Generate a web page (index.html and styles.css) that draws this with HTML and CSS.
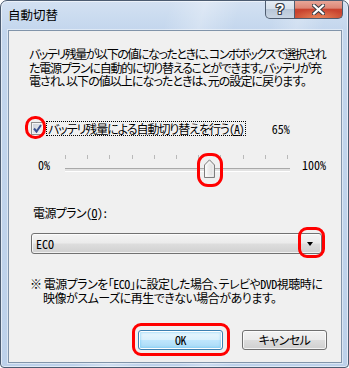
FILE: index.html
```html
<!DOCTYPE html>
<html lang="ja">
<head>
<meta charset="utf-8">
<link rel="stylesheet" href="styles.css">
</head>
<body>
<div class="window">
  <div class="titlebar">
    <div class="title">自動切替</div>
    <div class="caption-buttons">
      <div class="cap help"><span class="help-glyph">?</span></div>
      <div class="cap close">
        <svg width="13" height="11" viewBox="0 0 13 11">
          <path d="M2 1.5 L11 9.5 M11 1.5 L2 9.5" stroke="#3b3f46" stroke-width="4.2" stroke-linecap="square" fill="none"/>
          <path d="M2 1.5 L11 9.5 M11 1.5 L2 9.5" stroke="#ffffff" stroke-width="2.2" stroke-linecap="square" fill="none"/>
        </svg>
      </div>
    </div>
  </div>
  <div class="client">
    <p class="desc"><span class="line tight">バッテリ残量が以下の値になったときに、コンボボックスで選択され</span><span class="line">た電源プランに自動的に切り替えることができます。バッテリが充</span><span class="line loose">電され、以下の値以上になったときは、元の設定に戻ります。</span></p>

    <div class="check-row">
      <span class="checkbox">
        <svg width="11" height="11" viewBox="0 0 11 11"><path d="M2 5.5 L4.5 8.5 L9 2" stroke="#3c5290" stroke-width="2" fill="none"/></svg>
      </span>
      <span class="check-label">バッテリ残量による自動切り替えを行う<span class="lat">(<u>A</u>)</span></span>
      <span class="pct lat">65%</span>
      <span class="mark mark-check"></span>
    </div>

    <div class="slider-row">
      <span class="s-min lat">0%</span>
      <div class="slider">
        <div class="ticks">
          <i></i><i></i><i></i><i></i><i></i><i></i><i></i><i></i><i></i><i></i><i></i>
        </div>
        <div class="track"></div>
        <svg class="thumb" width="11" height="19" viewBox="0 0 11 19">
          <defs>
            <linearGradient id="tg" x1="0" y1="0" x2="1" y2="0">
              <stop offset="0" stop-color="#fbfbfb"/>
              <stop offset="1" stop-color="#d9d9d9"/>
            </linearGradient>
          </defs>
          <path d="M0.5 6 L5.5 0.8 L10.5 6 L10.5 18.5 L0.5 18.5 Z" fill="url(#tg)" stroke="#7d7d7d" stroke-width="1"/>
          <path d="M2 6.5 L5.5 3 L9 6.5 L9 17 L2 17 Z" fill="none" stroke="#ffffff" stroke-width="0.8" opacity="0.8"/>
        </svg>
        <span class="mark mark-thumb"></span>
      </div>
      <span class="s-max lat">100%</span>
    </div>

    <div class="plan-label">電源プラン<span class="lat">(<u>O</u>):</span></div>

    <div class="combo">
      <span class="combo-text lat">ECO</span>
      <span class="arrow"></span>
      <span class="mark mark-arrow"></span>
    </div>

    <div class="note">
      <span class="line">※ 電源プランを「<span class="lat">ECO</span>」に設定した場合、テレビや<span class="lat">DVD</span>視聴時に</span>
      <span class="line indent">映像がスムーズに再生できない場合があります。</span>
    </div>

    <div class="buttons">
      <span class="btn btn-ok"><span class="lat">OK</span><span class="mark mark-ok"></span></span>
      <span class="btn">キャンセル</span>
    </div>
  </div>
</div>
</body>
</html>
```
FILE: styles.css
```css
html, body {
  margin: 0;
  padding: 0;
}
body {
  width: 349px;
  height: 368px;
  overflow: hidden;
  background: #ffffff;
  font-family: "Noto Sans CJK JP", "Noto Sans", sans-serif;
  font-size: 12px;
  color: #000;
  font-feature-settings: "palt";
}
.lat {
  font-feature-settings: "hwid";
}
.window {
  box-sizing: border-box;
  width: 349px;
  height: 368px;
  border: 1px solid #4c5c71;
  border-radius: 7px 7px 4px 4px;
  background:
    linear-gradient(105deg, rgba(255,255,255,0) 38%, rgba(255,255,255,0.28) 46%, rgba(255,255,255,0) 54%, rgba(255,255,255,0) 62%, rgba(255,255,255,0.22) 68%, rgba(255,255,255,0) 74%),
    linear-gradient(180deg, #d3e1f2 0px, #c3d6ed 30px, #bdd1ea 368px);
  box-shadow: inset 0 0 0 1px rgba(255,255,255,0.55);
  display: flex;
  flex-direction: column;
  overflow: hidden;
}
.titlebar {
  height: 29px;
  flex: none;
  display: flex;
  justify-content: space-between;
  align-items: flex-start;
}
.title {
  padding: 7px 0 0 7px;
  font-size: 12.5px;
  line-height: 14px;
  font-feature-settings: normal;
  color: #000;
}
.caption-buttons {
  display: flex;
  margin-right: 5px;
  margin-top: -1px;
}
.cap {
  box-sizing: border-box;
  height: 19px;
  display: flex;
  align-items: center;
  justify-content: center;
  border: 1px solid #4f5d70;
  border-top: none;
}
.help {
  width: 30px;
  border-radius: 0 0 0 5px;
  background: linear-gradient(180deg, #e6edf5 0%, #d5dfea 48%, #b9c7d8 52%, #c9d5e3 100%);
}
.help-glyph {
  font-family: "Liberation Sans", sans-serif;
  font-weight: bold;
  font-size: 14px;
  line-height: 14px;
  color: #fff;
  text-shadow: -1px 0 #3d434c, 1px 0 #3d434c, 0 -1px #3d434c, 0 1px #3d434c, -1px -1px #3d434c, 1px 1px #3d434c, -1px 1px #3d434c, 1px -1px #3d434c;
  margin-top: -1px;
}
.close {
  width: 48px;
  border-left: none;
  border-radius: 0 0 5px 0;
  background:
    radial-gradient(ellipse 60% 50% at 50% 100%, rgba(240,150,100,0.8), rgba(240,150,100,0) 100%),
    linear-gradient(180deg, #e9aa9c 0%, #dd8676 45%, #c9432f 52%, #c8452f 100%);
}
.close svg {
  display: block;
}

.client {
  flex: 1;
  margin: 0 6px 4px 7px;
  border: 1px solid #8194aa;
  background: #f0f0f0;
  display: flex;
  flex-direction: column;
  box-shadow: 0 0 0 1px rgba(255,255,255,0.45);
}

.line {
  display: block;
  white-space: nowrap;
}

.desc {
  margin: 16px 0 0 20px;
  line-height: 13.5px;
  letter-spacing: -1.2px;
}
.desc .tight {
  letter-spacing: -1.45px;
}
.desc .loose {
  letter-spacing: -0.95px;
}

.check-row {
  position: relative;
  margin-top: 33.5px;
  height: 15px;
  display: flex;
  align-items: center;
}
.checkbox {
  box-sizing: border-box;
  margin-left: 22px;
  width: 13px;
  height: 13px;
  border: 1px solid #8f8f8f;
  background: linear-gradient(135deg, #c9ced8 0%, #e4e7ec 60%, #f4f4f4 100%);
  box-shadow: inset 0 0 0 1px #f4f4f4;
  display: flex;
  align-items: center;
  justify-content: center;
}
.checkbox svg {
  display: block;
}
.check-label {
  box-sizing: border-box;
  margin-left: 2px;
  height: 15px;
  line-height: 13px;
  padding: 0 1px 0 1px;
  border: 1px dotted #000;
  letter-spacing: -1.05px;
  white-space: nowrap;
}
.pct {
  margin-left: 26px;
  line-height: 14px;
}

.mark {
  position: absolute;
  box-sizing: border-box;
  border: 3px solid #ff0000;
  pointer-events: none;
}
.mark-check {
  left: 16px;
  top: -5px;
  width: 21px;
  height: 23px;
  border-radius: 10px;
}

.slider-row {
  margin-top: 14px;
  height: 30px;
  display: flex;
  align-items: flex-start;
}
.s-min {
  margin: 8px 0 0 29px;
  width: 27px;
  line-height: 14px;
}
.slider {
  position: relative;
  width: 225px;
  height: 30px;
}
.ticks {
  margin-top: 5px;
  width: 223px;
  height: 4px;
  display: flex;
  justify-content: space-between;
}
.ticks i {
  width: 1px;
  height: 4px;
  background: #b9b9b9;
}
.track {
  box-sizing: border-box;
  margin-top: 9px;
  width: 225px;
  height: 4px;
  border-top: 1px solid #a9a9a9;
  border-bottom: 1px solid #ffffff;
  background: #e2e2e2;
}
.thumb {
  position: absolute;
  left: 139px;
  top: 9px;
  display: block;
}
.mark-thumb {
  left: 132px;
  top: 3px;
  width: 26px;
  height: 34px;
  border-radius: 11px;
}
.s-max {
  margin: 8px 0 0 12px;
  line-height: 14px;
}

.plan-label {
  margin: 26px 0 0 24px;
  line-height: 14px;
  letter-spacing: -0.6px;
}

.combo {
  position: relative;
  box-sizing: border-box;
  margin: 13px 0 0 22px;
  width: 291px;
  height: 21px;
  border: 1px solid #717171;
  border-radius: 3px;
  background: linear-gradient(180deg, #f3f3f3 0%, #ebebeb 48%, #dddddd 52%, #d0d0d0 100%);
  box-shadow: inset 0 0 0 1px rgba(255,255,255,0.7);
  display: flex;
  align-items: center;
}
.combo-text {
  margin-left: 4px;
  line-height: 14px;
}
.arrow {
  margin-left: auto;
  margin-right: 8px;
  width: 0;
  height: 0;
  border-left: 3.5px solid transparent;
  border-right: 3.5px solid transparent;
  border-top: 4px solid #000;
}
.mark-arrow {
  left: 266px;
  top: -7px;
  width: 27px;
  height: 31px;
  border-radius: 9px;
}

.note {
  margin: 23px 0 0 21px;
  line-height: 13.5px;
  letter-spacing: -0.5px;
}
.note .indent {
  padding-left: 13px;
}

.buttons {
  margin-top: 26px;
  display: flex;
  justify-content: flex-end;
  gap: 19px;
  padding-right: 14px;
}
.btn {
  position: relative;
  box-sizing: border-box;
  width: 85px;
  height: 20px;
  border: 1px solid #707070;
  border-radius: 3px;
  background: linear-gradient(180deg, #f2f2f2 0%, #ebebeb 48%, #dddddd 52%, #cfcfcf 100%);
  box-shadow: inset 0 0 0 1px rgba(255,255,255,0.75);
  display: flex;
  align-items: center;
  justify-content: center;
  line-height: 14px;
  letter-spacing: -0.5px;
}
.btn-ok {
  border-color: #3c7fb1;
  background: linear-gradient(180deg, #eaf6fd 0%, #d9f0fc 48%, #bee6fd 52%, #a7d9f5 100%);
  box-shadow: inset 0 0 0 1px #ffffff, inset 0 0 2px 2px rgba(80,190,240,0.35);
}
.mark-ok {
  left: -7px;
  top: -8px;
  width: 98px;
  height: 33px;
  border-radius: 9px;
}
```
